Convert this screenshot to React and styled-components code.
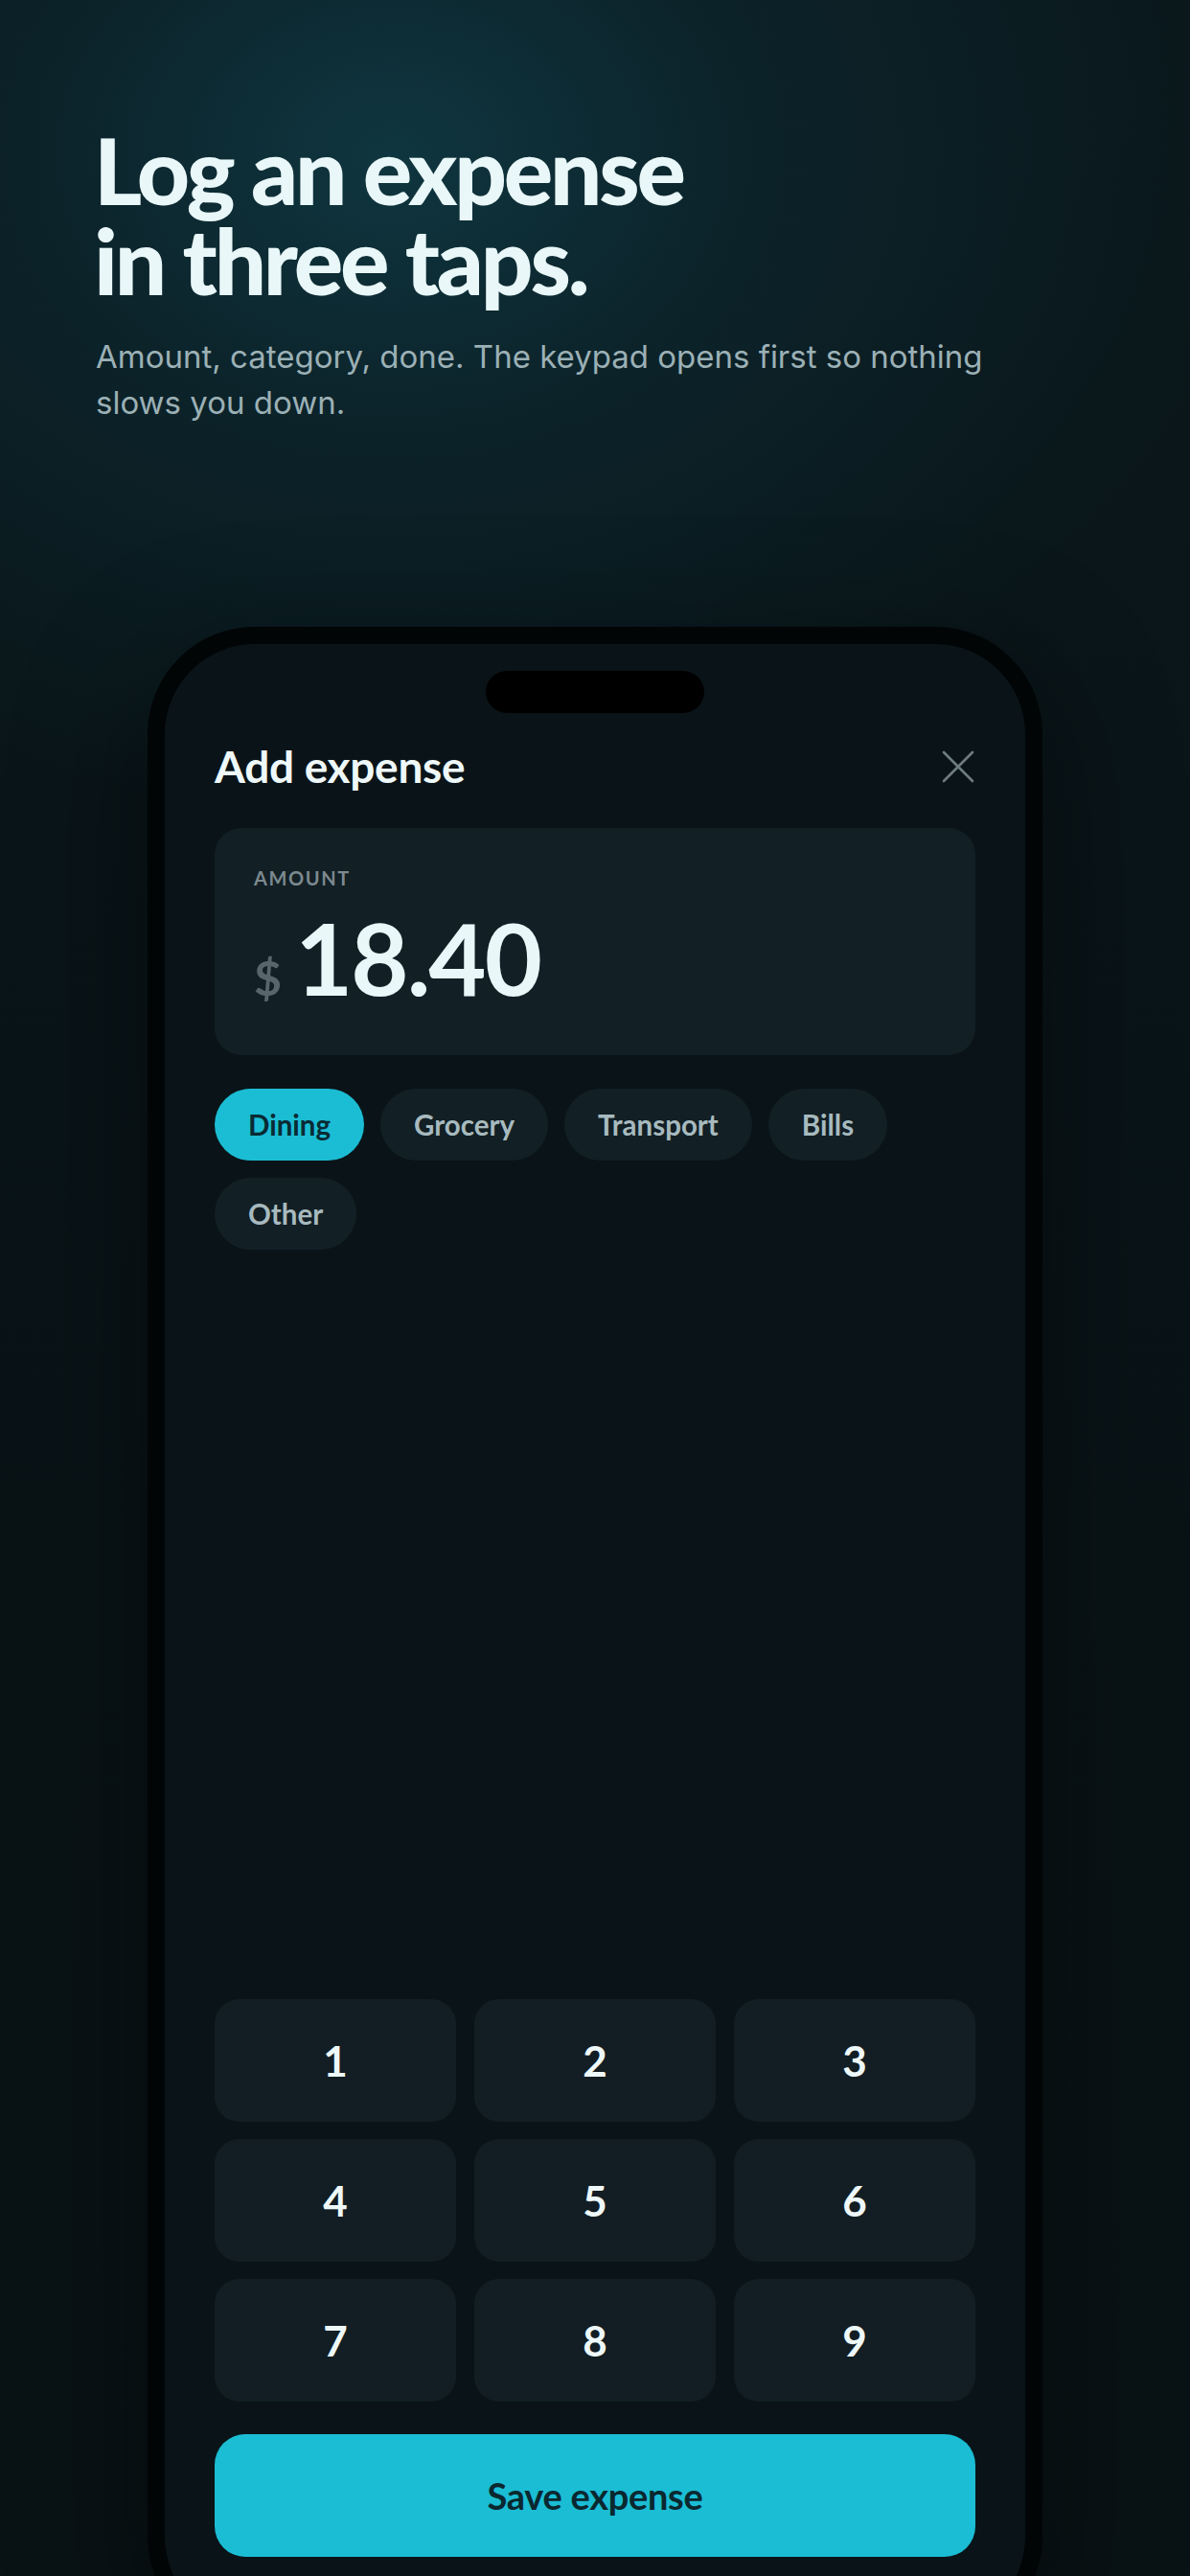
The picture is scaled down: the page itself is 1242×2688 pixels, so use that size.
import React from "react";
import styled, { createGlobalStyle } from "styled-components";

const GlobalStyle = createGlobalStyle`
  html, body {
    margin: 0;
    padding: 0;
    background: #091317;
  }
  * {
    box-sizing: border-box;
  }
`;

const Page = styled.div`
  width: 1242px;
  height: 2688px;
  overflow: hidden;
  display: flex;
  flex-direction: column;
  background:
    radial-gradient(ellipse 900px 700px at 33% 6%, #0f3640 0%, #0c232a 40%, rgba(10, 22, 27, 0) 100%),
    linear-gradient(180deg, #0a171b 0%, #091316 60%, #091215 100%);
`;

const Hero = styled.header`
  padding: 130px 100px 0 98px;
`;

const Headline = styled.h1`
  margin: 0;
  font-family: Lato, "Noto Sans", sans-serif;
  font-weight: 900;
  font-size: 96px;
  line-height: 94px;
  letter-spacing: -3.2px;
  color: #e9f7f8;
`;

const Sub = styled.p`
  margin: 30px 0 0 2px;
  max-width: 980px;
  font-family: Inter, "Noto Sans", sans-serif;
  font-size: 33px;
  line-height: 48px;
  letter-spacing: 0;
  color: #9bb0b5;
`;

const PhoneRow = styled.div`
  margin-top: 210px;
  display: flex;
  justify-content: center;
`;

const Phone = styled.div`
  width: 934px;
  border: 18px solid #020506;
  border-radius: 112px;
  background: #020506;
  box-shadow: 0 40px 140px rgba(0, 0, 0, 0.45);
`;

const Screen = styled.div`
  height: 2069px;
  border-radius: 94px;
  background: #0a1418;
  padding: 28px 52px 73px;
  display: flex;
  flex-direction: column;
  font-family: Lato, "Noto Sans", sans-serif;
`;

const Island = styled.div`
  align-self: center;
  width: 228px;
  height: 44px;
  border-radius: 22px;
  background: #000;
`;

const TitleRow = styled.div`
  margin-top: 29px;
  display: flex;
  align-items: center;
  justify-content: space-between;
`;

const Title = styled.h2`
  margin: 0;
  font-size: 46px;
  line-height: 53px;
  font-weight: 700;
  letter-spacing: -0.3px;
  color: #eef8f9;
`;

const CloseButton = styled.button`
  width: 40px;
  height: 40px;
  margin-right: -2px;
  padding: 0;
  border: 0;
  background: transparent;
  display: flex;
  align-items: center;
  justify-content: center;
`;

const AmountCard = styled.section`
  margin-top: 38px;
  height: 237px;
  border-radius: 28px;
  background: #121f25;
  padding: 40px 40px 0 41px;
`;

const Label = styled.div`
  font-size: 20px;
  line-height: 24px;
  font-weight: 700;
  letter-spacing: 1.6px;
  color: #7c898e;
`;

const AmountLine = styled.div`
  margin-top: 19px;
  display: flex;
  align-items: baseline;
  gap: 14px;
  line-height: 104px;
`;

const Currency = styled.span`
  font-size: 50px;
  font-weight: 700;
  color: #58666b;
`;

const Value = styled.span`
  font-size: 104px;
  font-weight: 700;
  letter-spacing: -2px;
  color: #e9f7f9;
`;

const Chips = styled.div`
  margin-top: 35px;
  display: flex;
  flex-wrap: wrap;
  gap: 18px 17px;
`;

const Chip = styled.button`
  height: 75px;
  padding: 0 35px;
  border: 0;
  border-radius: 38px;
  font-family: Lato, "Noto Sans", sans-serif;
  font-size: 29.5px;
  font-weight: 700;
  background: ${(p) => (p.$active ? "#1bbdd4" : "#121f25")};
  color: ${(p) => (p.$active ? "#0a2a33" : "#a7babf")};
`;

const Spacer = styled.div`
  flex: 1;
`;

const Keypad = styled.div`
  display: grid;
  grid-template-columns: repeat(3, 1fr);
  gap: 18px 19px;
`;

const Key = styled.button`
  height: 128px;
  border: 0;
  border-radius: 26px;
  background: #121e24;
  font-family: Lato, "Noto Sans", sans-serif;
  font-size: 44px;
  font-weight: 700;
  color: #eef8f9;
`;

const SaveButton = styled.button`
  margin-top: 34px;
  height: 128px;
  border: 0;
  border-radius: 32px;
  background: #1bbdd4;
  font-family: Lato, "Noto Sans", sans-serif;
  font-size: 38px;
  font-weight: 700;
  letter-spacing: -0.3px;
  color: #0a2830;
`;

const categories = ["Dining", "Grocery", "Transport", "Bills", "Other"];
const keys = ["1", "2", "3", "4", "5", "6", "7", "8", "9"];

export default function App() {
  return (
    <Page>
      <GlobalStyle />
      <Hero>
        <Headline>
          Log an expense
          <br />
          in three taps.
        </Headline>
        <Sub>
          Amount, category, done. The keypad opens first so nothing slows you
          down.
        </Sub>
      </Hero>

      <PhoneRow>
        <Phone>
          <Screen>
            <Island />
            <TitleRow>
              <Title>Add expense</Title>
              <CloseButton aria-label="Close">
                <svg width="34" height="34" viewBox="0 0 34 34">
                  <path
                    d="M2 2 L32 32 M32 2 L2 32"
                    stroke="#6e7c81"
                    strokeWidth="2.6"
                    strokeLinecap="round"
                  />
                </svg>
              </CloseButton>
            </TitleRow>

            <AmountCard>
              <Label>AMOUNT</Label>
              <AmountLine>
                <Currency>$</Currency>
                <Value>18.40</Value>
              </AmountLine>
            </AmountCard>

            <Chips>
              {categories.map((c) => (
                <Chip key={c} $active={c === "Dining"}>
                  {c}
                </Chip>
              ))}
            </Chips>

            <Spacer />

            <Keypad>
              {keys.map((k) => (
                <Key key={k}>{k}</Key>
              ))}
            </Keypad>
            <SaveButton>Save expense</SaveButton>
          </Screen>
        </Phone>
      </PhoneRow>
    </Page>
  );
}
